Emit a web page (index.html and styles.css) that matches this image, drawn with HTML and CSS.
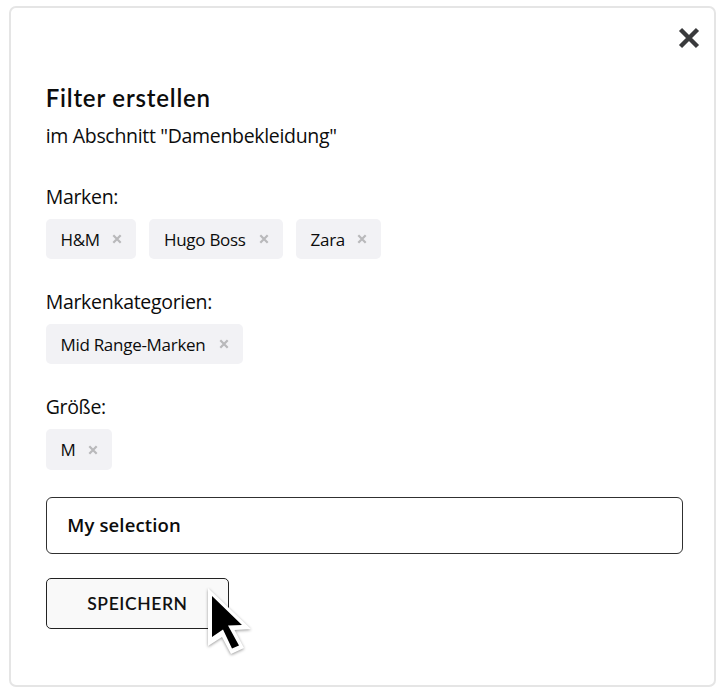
FILE: index.html
```html
<!DOCTYPE html>
<html lang="de">
<head>
<meta charset="utf-8">
<title>Filter erstellen</title>
<link rel="stylesheet" href="styles.css">
</head>
<body>
<main class="dialog">
  <button class="close" aria-label="Schließen">
    <svg width="22" height="22" viewBox="0 0 22 22"><path d="M2.5 2.5 19.5 19.5M19.5 2.5 2.5 19.5"/></svg>
  </button>
  <h1 class="title">Filter erstellen</h1>
  <p class="subtitle">im Abschnitt "Damenbekleidung"</p>

  <section class="group">
    <h2 class="label">Marken:</h2>
    <div class="chips">
      <span class="chip chip-hm">H&amp;M <svg class="remove" viewBox="0 0 10 10"><path d="M1.3 1.3 8.7 8.7M8.7 1.3 1.3 8.7"/></svg></span>
      <span class="chip chip-boss">Hugo Boss <svg class="remove" viewBox="0 0 10 10"><path d="M1.3 1.3 8.7 8.7M8.7 1.3 1.3 8.7"/></svg></span>
      <span class="chip chip-zara">Zara <svg class="remove" viewBox="0 0 10 10"><path d="M1.3 1.3 8.7 8.7M8.7 1.3 1.3 8.7"/></svg></span>
    </div>
  </section>

  <section class="group">
    <h2 class="label">Markenkategorien:</h2>
    <div class="chips">
      <span class="chip chip-mid">Mid Range-Marken <svg class="remove" viewBox="0 0 10 10"><path d="M1.3 1.3 8.7 8.7M8.7 1.3 1.3 8.7"/></svg></span>
    </div>
  </section>

  <section class="group">
    <h2 class="label">Größe:</h2>
    <div class="chips">
      <span class="chip chip-m">M <svg class="remove" viewBox="0 0 10 10"><path d="M1.3 1.3 8.7 8.7M8.7 1.3 1.3 8.7"/></svg></span>
    </div>
  </section>

  <div class="field">My selection</div>
  <button class="save">SPEICHERN</button>

  <svg class="cursor" width="50" height="76" viewBox="205 583 50 76">
    <path class="cursor-edge" d="M208 588 251 629 234.500 630 244 648 231 654 222 637 208 646Z"/>
    <path class="cursor-body" d="M212 596 242 625 228 625.500 239 645.500 232 648.500 223 629.500 212 637Z"/>
  </svg>
</main>
</body>
</html>
```
FILE: styles.css
```css
* {
  box-sizing: border-box;
}

body {
  margin: 0;
  padding: 6px 6px 7px 9px;
  height: 694px;
  background: #fff;
  color: #0c0c0c;
  font-family: "Open Sans", sans-serif;
  overflow: hidden;
}

.dialog {
  height: 681px;
  padding: 74px 31px 0 34.700px;
  border: 2px solid #e5e5e5;
  border-radius: 7px;
}

.close {
  position: absolute;
  left: 678px;
  top: 27px;
  width: 22px;
  height: 22px;
  padding: 0;
  border: 0;
  background: none;
}

.close svg {
  display: block;
}

.close path {
  stroke: #393a3c;
  stroke-width: 4.400;
  fill: none;
}

.title {
  margin: 0;
  font: 600 24px/32px Lato, sans-serif;
  letter-spacing: 0.800px;
}

.subtitle {
  margin: 7px 0 0;
  font-size: 19.500px;
  letter-spacing: -0.320px;
  line-height: 29px;
}

.group {
  height: 80.300px;
  margin-bottom: 25px;
}

.subtitle + .group {
  margin-top: 30.600px;
}

.label {
  margin: 0;
  font-size: 19.500px;
  font-weight: 400;
  letter-spacing: -0.320px;
  line-height: 32px;
}

.chips {
  display: flex;
  gap: 13.300px;
  margin-top: 6px;
}

.chip {
  display: flex;
  align-items: center;
  justify-content: space-between;
  height: 40.500px;
  padding: 0.500px 14px 0 14.700px;
  border-radius: 5px;
  background: #f2f2f5;
  font-size: 17px;
  letter-spacing: -0.280px;
  white-space: nowrap;
}

.chip-hm { width: 90.300px; }
.chip-boss { width: 133.300px; }
.chip-zara { width: 85.500px; }
.chip-mid { width: 196.900px; }
.chip-m { width: 65.900px; }

.remove {
  width: 10px;
  height: 10px;
  stroke: #b9b9bb;
  stroke-width: 2.200;
  fill: none;
}

.field {
  height: 57px;
  margin-top: 25.800px;
  padding-left: 20.500px;
  border: 1.300px solid #303030;
  border-radius: 6px;
  font-size: 18.500px;
  font-weight: 600;
  letter-spacing: 0.150px;
  line-height: 54px;
}

.save {
  display: block;
  width: 183.500px;
  height: 51px;
  margin-top: 24px;
  padding: 0;
  border: 1.300px solid #222;
  border-radius: 5px;
  background: #f9f9f9;
  color: #111;
  font: 600 17.500px/48px Lato, sans-serif;
  letter-spacing: 0.600px;
}

.cursor {
  position: absolute;
  left: 205px;
  top: 583px;
}

.cursor-edge {
  fill: #fff;
  filter: drop-shadow(0 1px 1.500px rgba(0, 0, 0, 0.4));
}

.cursor-body {
  fill: #000;
}
```
